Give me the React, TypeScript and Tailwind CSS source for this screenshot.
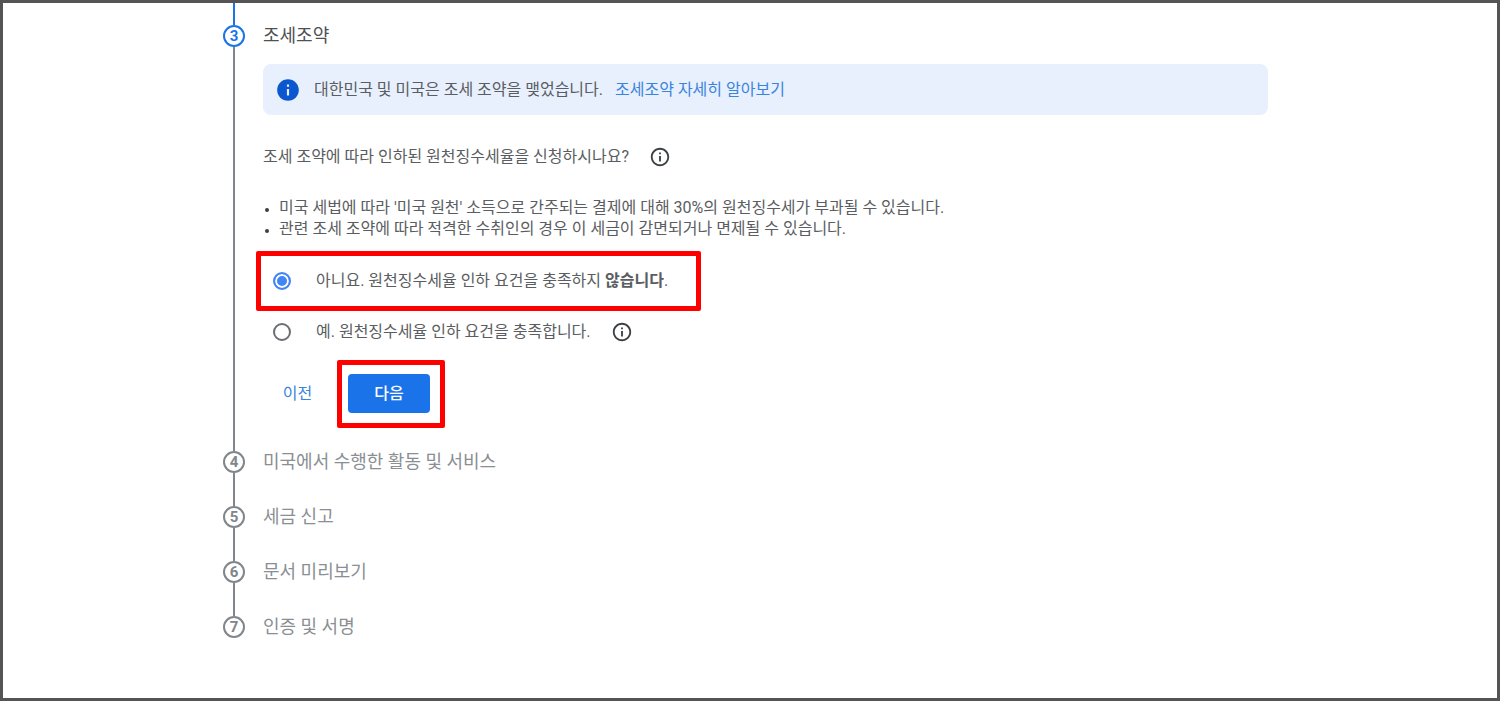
import { useState } from 'react'
import type { ReactNode } from 'react'
import { MdInfo, MdOutlineInfo } from 'react-icons/md'

const proximas = [
  { numero: 4, titulo: '미국에서 수행한 활동 및 서비스' },
  { numero: 5, titulo: '세금 신고' },
  { numero: 6, titulo: '문서 미리보기' },
  { numero: 7, titulo: '인증 및 서명' },
]

function Passo({ numero, titulo, ativo, ultimo, children }: { numero: number; titulo: string; ativo?: boolean; ultimo?: boolean; children?: ReactNode }) {
  return (
    <li className="flex gap-[18px]">
      <div className="flex w-[22px] shrink-0 flex-col items-center">
        <span className={`flex size-[22px] shrink-0 items-center justify-center rounded-full border-2 text-[15px] leading-none font-bold ${ativo ? 'border-[#1a73e8] text-[#1a73e8]' : 'border-[#80868b] text-[#80868b]'}`}>
          {numero}
        </span>
        {!ultimo && <span className="w-[2px] flex-1 bg-[#80868b]" />}
      </div>
      <div className={`min-w-0 flex-1 ${ultimo ? '' : ativo ? 'pb-[38px]' : 'pb-[33px]'}`}>
        <h2 className={`text-lg leading-[22px] ${ativo ? 'text-[#4d5054]' : 'text-[#8b8f93]'}`}>{titulo}</h2>
        {children}
      </div>
    </li>
  )
}

export default function App() {
  const [reducao, setReducao] = useState('nao')

  const radio = 'size-[18px] shrink-0 appearance-none rounded-full border-2 border-[#6b6e72] bg-white checked:border-[#4285f4] checked:bg-[#4285f4] checked:shadow-[inset_0_0_0_2px_white]'

  return (
    <main className="min-h-screen border-3 border-[#545454] bg-white font-['Roboto','Noto_Sans_CJK_KR',sans-serif] text-base text-[#5a5d61]">
      <div className="mx-auto w-full max-w-[1054px] pr-[9px]">
        <div className="flex h-[22px] w-[22px] justify-center">
          <span className="w-[2px] bg-[#1a73e8]" />
        </div>

        <ol>
          <Passo numero={3} titulo="조세조약" ativo>
            <div className="mt-[17px] flex min-h-[51px] items-center rounded-lg bg-[#e8f0fe] px-3">
              <MdInfo className="size-[26px] shrink-0 text-[#0b57d0]" />
              <p className="ml-[13px] leading-[21px]">
                대한민국 및 미국은 조세 조약을 맺었습니다.
                <a href="#" className="ml-3 text-[#3a84dc]">조세조약 자세히 알아보기</a>
              </p>
            </div>

            <div className="mt-[31px] flex items-center gap-5">
              <p className="leading-[22px]">조세 조약에 따라 인하된 원천징수세율을 신청하시나요?</p>
              <button type="button" aria-label="도움말">
                <MdOutlineInfo className="size-[22px] text-[#3c4043]" />
              </button>
            </div>

            <ul className="mt-[29px] list-disc pl-4 leading-[21px] marker:text-xs marker:text-[#3c4043]">
              <li>미국 세법에 따라 '미국 원천' 소득으로 간주되는 결제에 대해 30%의 원천징수세가 부과될 수 있습니다.</li>
              <li>관련 조세 조약에 따라 적격한 수취인의 경우 이 세금이 감면되거나 면제될 수 있습니다.</li>
            </ul>

            <div className="mt-4">
              <div className="relative flex h-[51px] items-center">
                <label className="flex items-center gap-[25px] pl-[10px]">
                  <input type="radio" name="reducao" checked={reducao === 'nao'} onChange={() => setReducao('nao')} className={radio} />
                  <span>아니요. 원천징수세율 인하 요건을 충족하지 <b>않습니다</b>.</span>
                </label>
                <span className="pointer-events-none absolute -top-1 -bottom-[5px] -left-[7px] w-[445px] rounded-[2px] border-5 border-[#ff0000]" />
              </div>
              <div className="flex h-[51px] items-center gap-5">
                <label className="flex items-center gap-[25px] pl-[10px]">
                  <input type="radio" name="reducao" checked={reducao === 'sim'} onChange={() => setReducao('sim')} className={radio} />
                  <span>예. 원천징수세율 인하 요건을 충족합니다.</span>
                </label>
                <button type="button" aria-label="도움말">
                  <MdOutlineInfo className="size-[22px] text-[#3c4043]" />
                </button>
              </div>
            </div>

            <div className="mt-[17px] flex items-center gap-4">
              <button type="button" className="h-[39px] w-[69px] text-[#3a84dc]">이전</button>
              <div className="relative">
                <button type="button" className="block h-[39px] w-[82px] rounded bg-[#1a73e8] font-medium text-white">다음</button>
                <span className="pointer-events-none absolute -top-[14px] -right-[15px] -bottom-[15px] -left-[11px] rounded-[2px] border-5 border-[#ff0000]" />
              </div>
            </div>
          </Passo>

          {proximas.map((p) => (
            <Passo key={p.numero} numero={p.numero} titulo={p.titulo} ultimo={p.numero === 7} />
          ))}
        </ol>
      </div>
    </main>
  )
}
